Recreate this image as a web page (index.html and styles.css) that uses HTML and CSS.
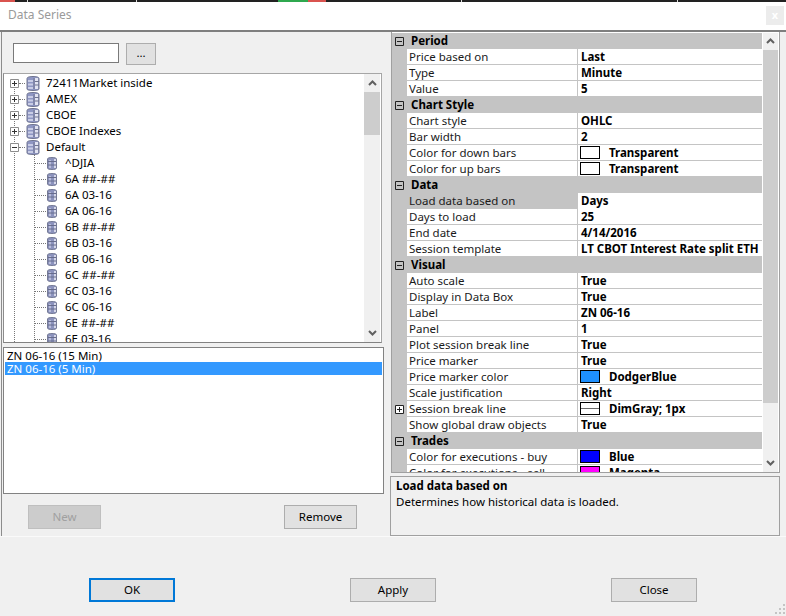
FILE: index.html
```html
<!DOCTYPE html>
<html lang="en">
<head>
<meta charset="utf-8">
<title>Data Series</title>
<link rel="stylesheet" href="styles.css">
</head>
<body>
<svg class="defs" width="0" height="0" aria-hidden="true">
  <symbol id="db-big" viewBox="0 0 14 15">
    <path d="M1 2.5C1 1 4 .5 7 .5s6 .5 6 2V13c0 1-3 1.5-6 1.5S1 14 1 13z" fill="#8f97c4" stroke="#70758f"/>
    <path d="M2 4h5v2H2zM2 7.5h5v2H2zM2 11h5v2H2z" fill="#c9cde6"/>
    <path d="M9 2h3v11H9z" fill="#e2e4f2"/>
    <path d="M9 5.5h4M9 9h4M8 2v11" stroke="#70758f" fill="none"/>
  </symbol>
  <symbol id="db-small" viewBox="0 0 10 13">
    <path d="M.5 2C.5 1 2.500.5 5 .5s4.500.5 4.500 1.500V11c0 1-2 1.500-4.500 1.500S.5 12 .5 11z" fill="#8c93bd" stroke="#767b96"/>
    <path d="M2 3h2v8H2z" fill="#b9bddb"/>
    <path d="M7 2h2v9H7z" fill="#d6d8ea"/>
    <path d="M1 4.500h8M1 8h8" stroke="#676c8c" fill="none"/>
  </symbol>
  <symbol id="plus" viewBox="0 0 9 9"><path d="M.5.5h8v8h-8z" fill="#fff" stroke="#8d8d8d"/><path d="M2 4.500h5M4.500 2v5" stroke="#333" fill="none"/></symbol>
  <symbol id="minus" viewBox="0 0 9 9"><path d="M.5.5h8v8h-8z" fill="#fff" stroke="#8d8d8d"/><path d="M2 4.500h5" stroke="#333" fill="none"/></symbol>
  <symbol id="gplus" viewBox="0 0 9 9"><path d="M.5.5h8v8h-8z" fill="#fff" stroke="#222"/><path d="M2 4.500h5M4.500 2v5" stroke="#222" fill="none"/></symbol>
  <symbol id="gminus" viewBox="0 0 9 9"><path d="M.5.5h8v8h-8z" fill="none" stroke="#222"/><path d="M2 4.500h5" stroke="#222" fill="none"/></symbol>
  <symbol id="up" viewBox="0 0 9 6"><path d="M1 5l3.500-3.500L8 5" fill="none" stroke="#606060" stroke-width="2"/></symbol>
  <symbol id="down" viewBox="0 0 9 6"><path d="M1 1l3.500 3.500L8 1" fill="none" stroke="#606060" stroke-width="2"/></symbol>
</svg>

<div class="strip">
  <i class="seg seg-red"></i><i class="tick t1"></i><i class="tick t2"></i><i class="seg seg-green"></i><i class="seg seg-red2"></i><i class="tick t3"></i><i class="tick t4"></i>
</div>
<header class="titlebar">
  <span class="title">Data Series</span>
  <span class="x">x</span>
</header>

<main class="main">
  <section class="left">
    <div class="search">
      <div class="input"></div>
      <div class="dots">...</div>
    </div>
    <div class="tree">
      <div class="tree-body">
        <div class="guide g1"></div>
        <div class="guide g2"></div>
        <div class="node"><svg class="exp"><use href="#plus"/></svg><i class="dash"></i><svg class="ic"><use href="#db-big"/></svg><span>72411Market inside</span></div>
        <div class="node"><svg class="exp"><use href="#plus"/></svg><i class="dash"></i><svg class="ic"><use href="#db-big"/></svg><span>AMEX</span></div>
        <div class="node"><svg class="exp"><use href="#plus"/></svg><i class="dash"></i><svg class="ic"><use href="#db-big"/></svg><span>CBOE</span></div>
        <div class="node"><svg class="exp"><use href="#plus"/></svg><i class="dash"></i><svg class="ic"><use href="#db-big"/></svg><span>CBOE Indexes</span></div>
        <div class="node"><svg class="exp"><use href="#minus"/></svg><i class="dash"></i><svg class="ic"><use href="#db-big"/></svg><span>Default</span></div>
        <div class="leaf"><i class="ldash"></i><svg class="ics"><use href="#db-small"/></svg><span>^DJIA</span></div>
        <div class="leaf"><i class="ldash"></i><svg class="ics"><use href="#db-small"/></svg><span>6A ##-##</span></div>
        <div class="leaf"><i class="ldash"></i><svg class="ics"><use href="#db-small"/></svg><span>6A 03-16</span></div>
        <div class="leaf"><i class="ldash"></i><svg class="ics"><use href="#db-small"/></svg><span>6A 06-16</span></div>
        <div class="leaf"><i class="ldash"></i><svg class="ics"><use href="#db-small"/></svg><span>6B ##-##</span></div>
        <div class="leaf"><i class="ldash"></i><svg class="ics"><use href="#db-small"/></svg><span>6B 03-16</span></div>
        <div class="leaf"><i class="ldash"></i><svg class="ics"><use href="#db-small"/></svg><span>6B 06-16</span></div>
        <div class="leaf"><i class="ldash"></i><svg class="ics"><use href="#db-small"/></svg><span>6C ##-##</span></div>
        <div class="leaf"><i class="ldash"></i><svg class="ics"><use href="#db-small"/></svg><span>6C 03-16</span></div>
        <div class="leaf"><i class="ldash"></i><svg class="ics"><use href="#db-small"/></svg><span>6C 06-16</span></div>
        <div class="leaf"><i class="ldash"></i><svg class="ics"><use href="#db-small"/></svg><span>6E ##-##</span></div>
        <div class="leaf"><i class="ldash"></i><svg class="ics"><use href="#db-small"/></svg><span>6E 03-16</span></div>
      </div>
      <div class="scroll tree-scroll">
        <svg class="arrow"><use href="#up"/></svg>
        <div class="thumb"></div>
        <div class="track"></div>
        <svg class="arrow"><use href="#down"/></svg>
      </div>
    </div>
    <div class="series">
      <div class="series-item">ZN 06-16 (15 Min)</div>
      <div class="series-item selected">ZN 06-16 (5 Min)</div>
    </div>
    <div class="series-actions">
      <div class="btn small disabled">New</div>
      <div class="btn small">Remove</div>
    </div>
  </section>

  <section class="right">
    <div class="grid">
      <div class="rows">
        <div class="cat"><svg class="gexp"><use href="#gminus"/></svg><b>Period</b></div>
        <div class="row"><div class="gut"></div><div class="name">Price based on</div><div class="val">Last</div></div>
        <div class="row"><div class="gut"></div><div class="name">Type</div><div class="val">Minute</div></div>
        <div class="row"><div class="gut"></div><div class="name">Value</div><div class="val">5</div></div>
        <div class="cat"><svg class="gexp"><use href="#gminus"/></svg><b>Chart Style</b></div>
        <div class="row"><div class="gut"></div><div class="name">Chart style</div><div class="val">OHLC</div></div>
        <div class="row"><div class="gut"></div><div class="name">Bar width</div><div class="val">2</div></div>
        <div class="row"><div class="gut"></div><div class="name">Color for down bars</div><div class="val"><i class="sw"></i>Transparent</div></div>
        <div class="row"><div class="gut"></div><div class="name">Color for up bars</div><div class="val"><i class="sw"></i>Transparent</div></div>
        <div class="cat"><svg class="gexp"><use href="#gminus"/></svg><b>Data</b></div>
        <div class="row sel"><div class="gut"></div><div class="name">Load data based on</div><div class="val">Days</div></div>
        <div class="row"><div class="gut"></div><div class="name">Days to load</div><div class="val">25</div></div>
        <div class="row"><div class="gut"></div><div class="name">End date</div><div class="val">4/14/2016</div></div>
        <div class="row"><div class="gut"></div><div class="name">Session template</div><div class="val">LT CBOT Interest Rate split ETH</div></div>
        <div class="cat"><svg class="gexp"><use href="#gminus"/></svg><b>Visual</b></div>
        <div class="row"><div class="gut"></div><div class="name">Auto scale</div><div class="val">True</div></div>
        <div class="row"><div class="gut"></div><div class="name">Display in Data Box</div><div class="val">True</div></div>
        <div class="row"><div class="gut"></div><div class="name">Label</div><div class="val">ZN 06-16</div></div>
        <div class="row"><div class="gut"></div><div class="name">Panel</div><div class="val">1</div></div>
        <div class="row"><div class="gut"></div><div class="name">Plot session break line</div><div class="val">True</div></div>
        <div class="row"><div class="gut"></div><div class="name">Price marker</div><div class="val">True</div></div>
        <div class="row"><div class="gut"></div><div class="name">Price marker color</div><div class="val"><i class="sw dodger"></i>DodgerBlue</div></div>
        <div class="row"><div class="gut"></div><div class="name">Scale justification</div><div class="val">Right</div></div>
        <div class="row"><div class="gut"><svg class="gexp"><use href="#gplus"/></svg></div><div class="name">Session break line</div><div class="val"><i class="sw line"></i>DimGray; 1px</div></div>
        <div class="row"><div class="gut"></div><div class="name">Show global draw objects</div><div class="val">True</div></div>
        <div class="cat"><svg class="gexp"><use href="#gminus"/></svg><b>Trades</b></div>
        <div class="row"><div class="gut"></div><div class="name">Color for executions - buy</div><div class="val"><i class="sw blue"></i>Blue</div></div>
        <div class="row"><div class="gut"></div><div class="name">Color for executions - sell</div><div class="val"><i class="sw magenta"></i>Magenta</div></div>
      </div>
      <div class="scroll grid-scroll">
        <svg class="arrow"><use href="#up"/></svg>
        <div class="thumb"></div>
        <div class="track"></div>
        <svg class="arrow"><use href="#down"/></svg>
      </div>
    </div>
    <div class="desc">
      <b>Load data based on</b>
      <p>Determines how historical data is loaded.</p>
    </div>
  </section>
</main>

<footer class="footer">
  <div class="btn large default">OK</div>
  <div class="btn large">Apply</div>
  <div class="btn large">Close</div>
  <svg class="grip" width="10" height="10" viewBox="0 0 10 10" aria-hidden="true"><path d="M8 0h2v2H8zM4 4h2v2H4zM8 4h2v2H8zM0 8h2v2H0zM4 8h2v2H4zM8 8h2v2H8z" fill="#c4c4c4"/></svg>
</footer>
</body>
</html>
```
FILE: styles.css
```css
* { box-sizing: border-box; }
html, body { margin: 0; padding: 0; }
body {
  width: 786px;
  height: 616px;
  overflow: hidden;
  position: relative;
  background: #f0f0f0;
  font-family: "Noto Sans", "Open Sans", sans-serif;
  font-size: 11.5px;
  line-height: 16px;
  color: #000;
}
.defs { position: absolute; }
.strip { height: 2px; background: #222; position: relative; }
.seg, .tick { position: absolute; top: 0; height: 2px; }
.tick { width: 1px; background: #ddd; }
.seg-red { left: 0; width: 15px; background: #d9534f; }
.seg-green { left: 278px; width: 30px; background: #2fa84f; }
.seg-red2 { left: 308px; width: 18px; background: #d9534f; }
.t1 { left: 27px; }
.t2 { left: 136px; }
.t3 { left: 461px; }
.t4 { left: 677px; }

.titlebar {
  height: 30px;
  background: #fff;
  border-bottom: 2px solid #7f7f7f;
  display: flex;
  align-items: center;
  justify-content: space-between;
  padding: 0 2px 2px 8px;
}
.title { color: #9a9a9a; font-size: 12px; }
.x {
  width: 18px;
  height: 19px;
  background: #ececec;
  color: #fff;
  text-align: center;
  font-size: 11px;
  line-height: 18px;
  font-weight: 700;
}

.main { display: flex; height: 505px; border-bottom: 1px solid #fafafa; }

.left {
  width: 390px;
  padding-left: 1px;
  border-left: 1px solid #8c8c8c;
  margin-left: 1px;
  width: 389px;
  height: 504px;
}
.search { height: 41px; display: flex; padding: 11px 0 0 10px; gap: 7px; align-items: flex-start; }
.input { width: 106px; height: 20px; background: #fff; border: 1px solid #7a7a7a; }
.dots {
  width: 30px; height: 22px;
  background: #e1e1e1;
  border: 1px solid #adadad;
  text-align: center;
  line-height: 18px;
}
.tree {
  width: 379px;
  height: 270px;
  background: #fff;
  border: 1px solid #a6a6a6;
  border-left-color: #8c8c8c;
  border-bottom-color: #828282;
  display: flex;
}
.tree-body {
  flex: 1;
  position: relative;
  overflow: hidden;
  padding-top: 1px;
}
.guide { position: absolute; border-left: 1px dotted #777; }
.g1 { left: 10px; top: 6px; height: 270px; }
.g2 { left: 30px; top: 80px; height: 200px; }
.node, .leaf { height: 16px; display: flex; align-items: center; white-space: nowrap; position: relative; }
.node { padding-left: 6px; }
.leaf { padding-left: 30px; }
.exp { width: 9px; height: 9px; flex: none; }
.dash { width: 6px; flex: none; border-top: 1px dotted #777; margin-right: 1px; }
.ldash { width: 12px; flex: none; border-top: 1px dotted #777; margin-right: 1px; }
.ic { width: 14px; height: 15px; flex: none; margin-right: 6px; }
.ics { width: 10px; height: 13px; flex: none; margin-right: 8px; }
.scroll { display: flex; flex-direction: column; align-items: center; flex: none; background: #f0f0f0; }
.arrow { width: 9px; height: 6px; flex: none; }
.tree-scroll { width: 16px; margin-right: 1px; padding: 0; }
.tree-scroll .arrow:first-child { margin: 6px 0 6px; }
.tree-scroll .thumb { width: 100%; height: 43px; background: #cdcdcd; flex: none; }
.tree-scroll .track { flex: 1; }
.tree-scroll .arrow:last-child { margin: 5px 0 6px; }

.series {
  width: 381px;
  height: 147px;
  margin-top: 4px;
  background: #fff;
  border: 1px solid #828282;
  padding-top: 1px;
  padding-left: 1px;
  padding-right: 1px;
}
.series-item { height: 13px; line-height: 13px; padding-left: 2px; white-space: nowrap; }
.series-item.selected { background: #3399ff; color: #fff; }
.series-actions { display: flex; justify-content: space-between; padding: 11px 0 0 25px; width: 354px; }

.btn {
  background: #e1e1e1;
  border: 1px solid #adadad;
  text-align: center;
  color: #000;
}
.small { width: 73px; height: 24px; line-height: 22px; }
.disabled { background: #cccccc; color: #a0a0a0; border-color: #bfbfbf; }
.large { width: 86px; height: 24px; line-height: 22px; }
.default { border: 2px solid #0078d7; line-height: 20px; }

.right { width: 395px; height: 504px; padding: 0 0 0 0; margin-left: 0; }
.grid {
  width: 389px;
  height: 441px;
  margin-left: 1px;
  border: 1px solid #a0a0a0;
  border-top: 0;
  background: #fff;
  display: flex;
  overflow: hidden;
}
.rows { width: 370px; flex: none; padding-top: 1px; }
.cat {
  height: 16px;
  background: #c4c4c4;
  display: flex;
  align-items: center;
}
.cat b { margin-left: 7px; font-size: 11.5px; }
.gexp { width: 9px; height: 9px; flex: none; margin-left: 3px; display: block; }
.row { display: flex; height: 16px; }
.gut { width: 15px; flex: none; background: #c4c4c4; display: flex; align-items: center; }
.name {
  width: 171px;
  flex: none;
  padding-left: 2px;
  border-bottom: 1px solid #c4c4c4;
  border-right: 1px solid #c4c4c4;
  color: #1a1a1a;
  white-space: nowrap;
  overflow: hidden;
  line-height: 15px;
}
.val {
  flex: 1;
  min-width: 0;
  padding-left: 3px;
  border-bottom: 1px solid #c4c4c4;
  font-weight: 700;
  white-space: nowrap;
  overflow: hidden;
  display: flex;
  align-items: center;
}
.sel .name { background: #c4c4c4; }
.sel .val { border-bottom-color: #fff; }
.sw {
  width: 20px;
  height: 13px;
  flex: none;
  background: #fff;
  border: 1px solid #000;
  margin: 0 9px 0 -1px;
}
.dodger { background: #1e90ff; }
.blue { background: #0000ff; }
.magenta { background: #ff00ff; }
.line { background: linear-gradient(#fff 5px, #696969 5px, #696969 6px, #fff 6px); }
.grid-scroll { width: 15px; margin-left: 1px; margin-top: 1px; }
.grid-scroll .arrow:first-child { margin: 5px 0 6px; }
.grid-scroll .thumb { width: 100%; height: 353px; background: #cdcdcd; flex: none; }
.grid-scroll .track { flex: 1; }
.grid-scroll .arrow:last-child { margin: 0 0 6px; }
.desc {
  width: 390px;
  height: 60px;
  margin-top: 3px;
  border: 1px solid #a0a0a0;
  padding: 1px 5px;
  white-space: nowrap;
}
.desc p { margin: 0; }

.footer {
  height: 78px;
  display: flex;
  justify-content: center;
  gap: 175px;
  padding-top: 41px;
  position: relative;
}
.grip { position: absolute; right: 1px; bottom: 1px; }
```
